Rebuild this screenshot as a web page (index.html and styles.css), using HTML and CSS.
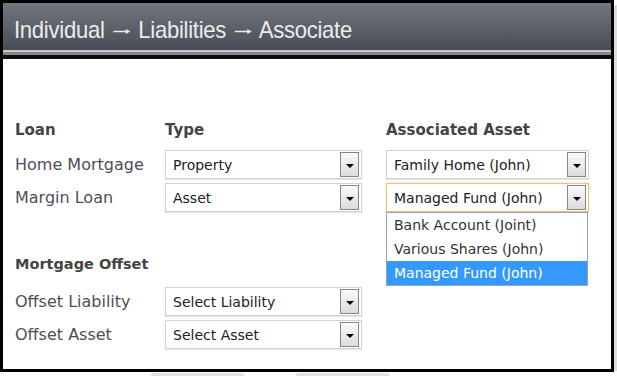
FILE: index.html
```html
<!DOCTYPE html>
<html lang="en">
<head>
    <meta charset="UTF-8">
    <meta name="viewport" content="width=device-width, initial-scale=1.0">
    <title>Associate Liabilities</title>
    <link rel="stylesheet" href="styles.css">
</head>
<body>
    <div class="screen">
        <div class="frame">
            <div class="titlebar">
                <h1>Individual
                    <svg class="arrow" viewBox="0 0 20 10" width="20" height="10"><path d="M1 5.5H17" stroke="#ececec" stroke-width="1.4"/><path d="M14.5 3L19.5 5.5L14.5 8Z" fill="#ececec"/></svg>
                    Liabilities
                    <svg class="arrow" viewBox="0 0 20 10" width="20" height="10"><path d="M1 5.5H17" stroke="#ececec" stroke-width="1.4"/><path d="M14.5 3L19.5 5.5L14.5 8Z" fill="#ececec"/></svg>
                    Associate</h1>
            </div>
            <div class="rule"></div>

            <div class="form">
                <div class="row heads">
                    <div class="label">Loan</div>
                    <div class="type-col">Type</div>
                    <div class="asset-col">Associated Asset</div>
                </div>

                <div class="row first">
                    <div class="label">Home Mortgage</div>
                    <div class="type-col">
                        <div class="select"><span>Property</span><span class="btn"></span></div>
                    </div>
                    <div class="asset-col">
                        <div class="select wide"><span>Family Home (John)</span><span class="btn"></span></div>
                    </div>
                </div>

                <div class="row">
                    <div class="label">Margin Loan</div>
                    <div class="type-col">
                        <div class="select"><span>Asset</span><span class="btn"></span></div>
                    </div>
                    <div class="asset-col">
                        <div class="dropdown">
                            <div class="select wide focused"><span>Managed Fund (John)</span><span class="btn"></span></div>
                            <ul class="options">
                                <li>Bank Account (Joint)</li>
                                <li>Various Shares (John)</li>
                                <li class="selected">Managed Fund (John)</li>
                            </ul>
                        </div>
                    </div>
                </div>

                <div class="row heads offset-head">
                    <div class="label">Mortgage Offset</div>
                </div>

                <div class="row first">
                    <div class="label">Offset Liability</div>
                    <div class="type-col">
                        <div class="select"><span>Select Liability</span><span class="btn"></span></div>
                    </div>
                </div>

                <div class="row">
                    <div class="label">Offset Asset</div>
                    <div class="type-col">
                        <div class="select"><span>Select Asset</span><span class="btn"></span></div>
                    </div>
                </div>
            </div>
        </div>
        <div class="edge"></div>
    </div>

    <div class="tabs">
        <div class="tab"></div>
        <div class="tab"></div>
    </div>
</body>
</html>
```

FILE: styles.css
```css
body {
    margin: 0;
    padding: 0;
    background-color: #fff;
    font-family: "DejaVu Sans", Verdana, sans-serif;
    width: 617px;
    height: 376px;
    overflow: hidden;
}

.screen {
    display: flex;
}

.frame {
    width: 608px;
    height: 366px;
    border: 3px solid #000;
}

.edge {
    width: 3px;
    height: 366px;
    margin-top: 5px;
    background-color: #dedede;
}

.titlebar {
    height: 49px;
    padding: 7px 0 0 11px;
    box-sizing: border-box;
    display: flex;
    align-items: center;
    background: linear-gradient(#72767e, #484d54);
    border-bottom: 2px solid #c6c8ca;
}

/* no narrow face installed, so squeeze the sans */
.titlebar h1 {
    margin: 0;
    font-family: "Liberation Sans", Arial, sans-serif;
    font-weight: normal;
    font-size: 24px;
    letter-spacing: -0.3px;
    color: #ececec;
    transform: scaleX(0.92);
    transform-origin: left center;
    white-space: nowrap;
}

.titlebar .arrow {
    margin: 0 2px;
    vertical-align: 2px;
}

.rule {
    height: 3px;
    background-color: #85888c;
    border-bottom: 4px solid #0d0d0d;
}

.form {
    padding: 61px 0 0 12px;
}

.row {
    display: flex;
    align-items: center;
    height: 29px;
    margin-top: 4px;
}

.row.first {
    margin-top: 10px;
}

.heads {
    height: 20px;
    margin-top: 0;
    font-weight: bold;
    font-size: 15px;
    color: #444;
}

.offset-head {
    margin-top: 42px;
    font-size: 14.5px;
}

.offset-head + .row.first {
    margin-top: 13px;
}

.label {
    width: 150px;
    font-size: 16px;
    color: #4e4e58;
}

.heads .label {
    font-size: inherit;
    color: inherit;
}

.type-col {
    width: 221px;
}

.select {
    width: 197px;
    height: 29px;
    box-sizing: border-box;
    padding: 0 2px 0 7px;
    display: flex;
    align-items: center;
    justify-content: space-between;
    background-color: #fff;
    border: 1px solid #d2d2d2;
    box-shadow: 0 1px 1px #e6e6e6;
    font-size: 14px;
    color: #222;
}

.select.wide {
    width: 203px;
}

.select.focused {
    border-color: #efc27b;
    box-shadow: 0 0 2px #f3d7a8;
}

.btn {
    width: 19px;
    height: 25px;
    box-sizing: border-box;
    display: flex;
    align-items: center;
    justify-content: center;
    border: 1px solid #858585;
    background: linear-gradient(#fafafa, #dcdcdc);
}

.btn::after {
    content: "";
    margin-top: 3px;
    border-left: 4px solid transparent;
    border-right: 4px solid transparent;
    border-top: 4px solid #000;
}

.dropdown {
    position: relative;
}

.options {
    position: absolute;
    top: 100%;
    left: 0;
    width: 202px;
    margin: 0;
    padding: 0;
    list-style: none;
    box-sizing: border-box;
    background-color: #fff;
    border: 1px solid #8fa5bf;
    z-index: 2;
}

.options li {
    height: 24px;
    line-height: 24px;
    padding-left: 7px;
    font-size: 14px;
    color: #333;
}

.options li.selected {
    background-color: #3399ff;
    color: #fff;
}

.tabs {
    display: flex;
    gap: 50px;
    padding-left: 150px;
    margin-top: 1px;
}

.tab {
    width: 95px;
    height: 6px;
    background-color: #e2e2e2;
    border-radius: 4px 4px 0 0;
}
```
